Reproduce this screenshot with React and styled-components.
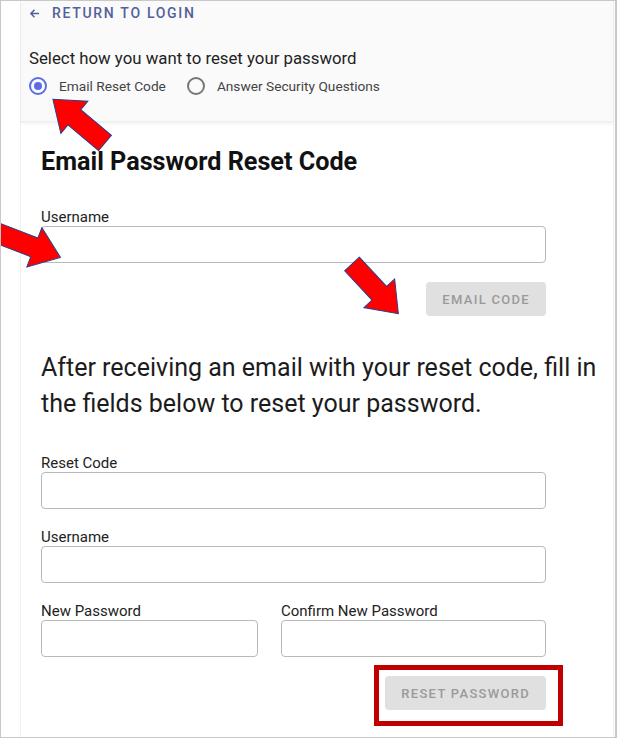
import React, { useState } from 'react';
import styled, { createGlobalStyle } from 'styled-components';

const GlobalStyle = createGlobalStyle`
  body {
    margin: 0;
    font-family: Roboto, "Liberation Sans", sans-serif;
    background: #fff;
  }
  * { box-sizing: border-box; }
`;

const Frame = styled.div`
  position: relative;
  width: 617px;
  height: 738px;
  border: 1px solid #c8c8c8;
  border-right-width: 2px;
  background: #fff;
  overflow: hidden;
  padding-left: 19px;
  padding-right: 1px;
`;

const Card = styled.div`
  height: 100%;
  border-left: 1px solid #f0f0f0;
  border-right: 1px solid #f0f0f0;
`;

const Header = styled.div`
  background: #fafafa;
  height: 121px;
  padding: 2px 8px 0;
  box-shadow: 0 2px 3px rgba(0, 0, 0, 0.06);
  border-bottom: 1px solid #ededed;
`;

const BackLink = styled.a`
  display: inline-flex;
  align-items: center;
  gap: 12px;
  height: 20px;
  color: #53609a;
  font-size: 14px;
  font-weight: 500;
  letter-spacing: 1.7px;
  text-decoration: none;
  cursor: pointer;
`;

const Prompt = styled.div`
  margin-top: 25px;
  font-size: 16.8px;
  line-height: 20px;
  color: #222;
`;

const RadioRow = styled.div`
  display: flex;
  align-items: center;
  gap: 21px;
  margin-top: 9px;
  height: 18px;
`;

const RadioOption = styled.label`
  display: flex;
  align-items: center;
  gap: 12px;
  font-size: 13.7px;
  color: #444;
  cursor: pointer;
`;

const RadioCircle = styled.span`
  width: 18px;
  height: 18px;
  border-radius: 50%;
  border: 2px solid ${p => (p.checked ? '#5b6ee1' : '#777')};
  display: flex;
  align-items: center;
  justify-content: center;
  &::after {
    content: '';
    width: 8px;
    height: 8px;
    border-radius: 50%;
    background: ${p => (p.checked ? '#5b6ee1' : 'transparent')};
  }
`;

const Body = styled.div`
  padding: 25px 8px 0 20px;
`;

const Title = styled.h2`
  margin: 0;
  font-size: 25.2px;
  line-height: 30px;
  font-weight: 700;
  color: #111;
`;

const Form = styled.div`
  width: 505px;
`;

const Field = styled.div`
  margin-top: ${p => p.top || 0}px;
  flex: ${p => p.grow || 'none'};
`;

const Label = styled.div`
  font-size: 15px;
  color: #222;
  line-height: 18px;
`;

const Input = styled.input`
  display: block;
  width: 100%;
  height: 37px;
  border: 1px solid #b9b9b9;
  border-radius: 4px;
  background: #fff;
  font: inherit;
  padding: 0 10px;
  outline: none;
`;

const Row = styled.div`
  display: flex;
  gap: 23px;
`;

const Actions = styled.div`
  display: flex;
  justify-content: flex-end;
  margin-top: ${p => p.top || 0}px;
`;

const Button = styled.button`
  height: 34px;
  padding: 0 16px;
  border: none;
  border-radius: 4px;
  background: #e0e0e0;
  color: #9a9a9a;
  font-family: Roboto, sans-serif;
  font-size: 13px;
  font-weight: 500;
  letter-spacing: 1.3px;
  cursor: default;
`;

const Intro = styled.p`
  margin: 34px 0 0;
  font-size: 25px;
  line-height: 36px;
  color: #1c1c1c;
`;

const Arrow = styled.svg`
  position: absolute;
  overflow: visible;
  pointer-events: none;
`;

const Highlight = styled.div`
  position: absolute;
  left: 373px;
  top: 664px;
  width: 189px;
  height: 61px;
  border: 5px solid #c00000;
`;

const arrowShape = 'M0,-10 L40,-10 L40,-21 L68,0 L40,21 L40,10 L0,10 Z';

const RedArrow = ({ x, y, angle }) => (
  <Arrow width="1" height="1" style={{ left: x, top: y }}>
    <path d={arrowShape} transform={`rotate(${angle})`} fill="#ff0000" stroke="#2b3f8c" strokeWidth="1" />
  </Arrow>
);

export default function App() {
  const [method, setMethod] = useState('email');

  return (
    <>
      <GlobalStyle />
      <Frame>
        <Card>
          <Header>
            <BackLink>
              <svg width="11" height="11" viewBox="0 0 12 12">
                <path d="M11 6H2M6 2L2 6l4 4" fill="none" stroke="#53609a" strokeWidth="1.6" />
              </svg>
              RETURN TO LOGIN
            </BackLink>
            <Prompt>Select how you want to reset your password</Prompt>
            <RadioRow>
              <RadioOption onClick={() => setMethod('email')}>
                <RadioCircle checked={method === 'email'} />
                Email Reset Code
              </RadioOption>
              <RadioOption onClick={() => setMethod('questions')}>
                <RadioCircle checked={method === 'questions'} />
                Answer Security Questions
              </RadioOption>
            </RadioRow>
          </Header>
          <Body>
            <Title>Email Password Reset Code</Title>
            <Form>
              <Field top={31}>
                <Label>Username</Label>
                <Input type="text" />
              </Field>
              <Actions top={19}>
                <Button>EMAIL CODE</Button>
              </Actions>
            </Form>
            <Intro>
              After receiving an email with your reset code, fill in the fields below to reset your password.
            </Intro>
            <Form>
              <Field top={32}>
                <Label>Reset Code</Label>
                <Input type="text" />
              </Field>
              <Field top={19}>
                <Label>Username</Label>
                <Input type="text" />
              </Field>
              <Row>
                <Field grow="0 0 217px" top={19}>
                  <Label>New Password</Label>
                  <Input type="password" />
                </Field>
                <Field grow="1" top={19}>
                  <Label>Confirm New Password</Label>
                  <Input type="password" />
                </Field>
              </Row>
              <Actions top={19}>
                <Button>RESET PASSWORD</Button>
              </Actions>
            </Form>
          </Body>
        </Card>
        <RedArrow x={104} y={142} angle={-140} />
        <RedArrow x={-4} y={232} angle={21} />
        <RedArrow x={351} y={263} angle={47} />
        <Highlight />
      </Frame>
    </>
  );
}
